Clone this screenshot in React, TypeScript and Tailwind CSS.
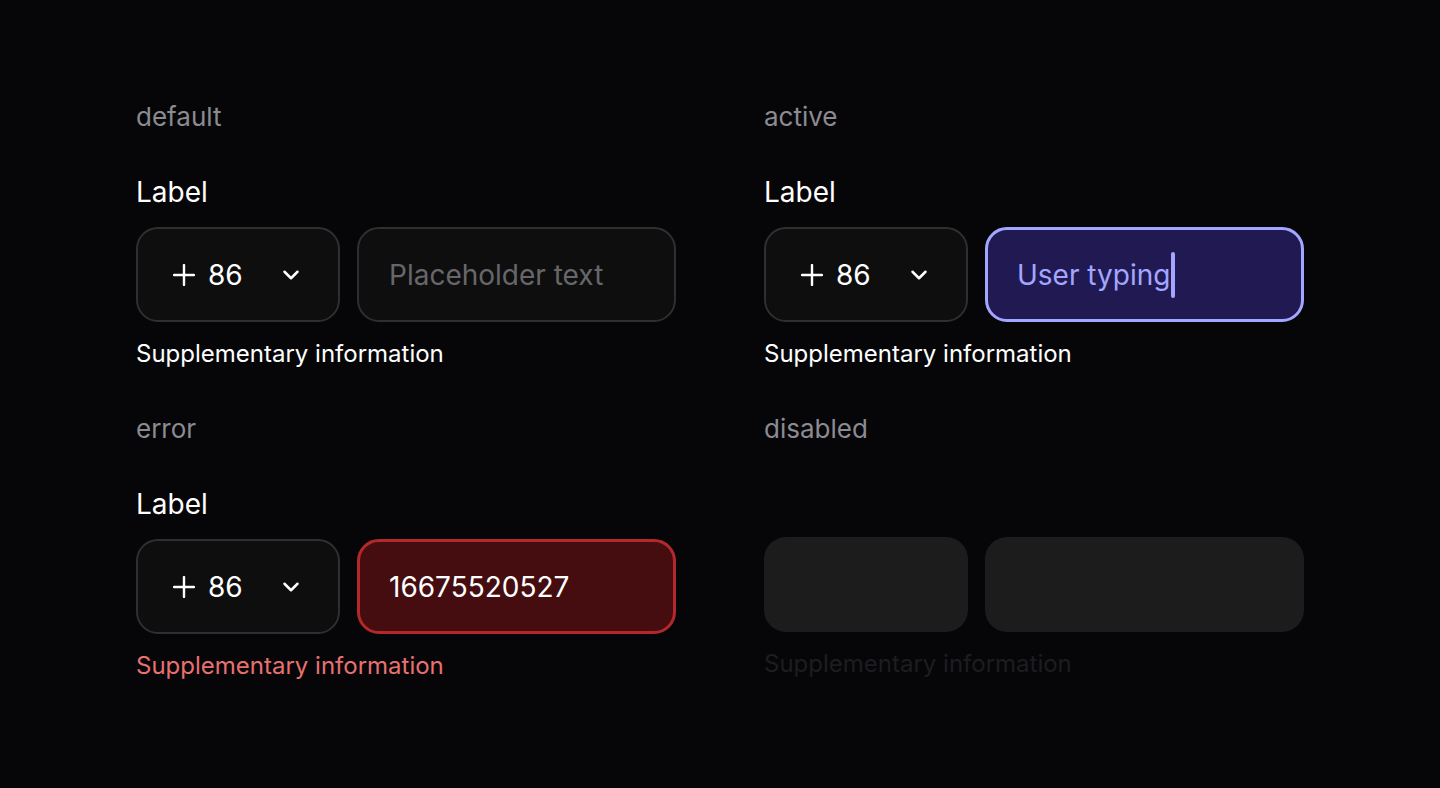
import React from 'react';

type State = 'default' | 'active' | 'error' | 'disabled';

const Chevron: React.FC = () => (
  <svg width="26" height="26" viewBox="0 0 24 24" fill="none" stroke="currentColor" strokeWidth="2.3" strokeLinecap="round" strokeLinejoin="round">
    <path d="M6 9l6 6 6-6" />
  </svg>
);

const Plus: React.FC = () => (
  <svg width="22" height="22" viewBox="0 0 22 22" fill="none" stroke="currentColor" strokeWidth="2.4" strokeLinecap="round">
    <path d="M11 1v20M1 11h20" />
  </svg>
);

const PhoneField: React.FC<{ state: State }> = ({ state }) => {
  if (state === 'disabled') {
    return (
      <div className="flex flex-col">
        <div className="h-[32px] text-[26px] leading-[32px] text-[#8b8b91]">disabled</div>
        <div className="mt-[92px] flex gap-[17px]">
          <div className="h-[95px] w-[204px] rounded-[22px] bg-[#1c1c1d]" />
          <div className="h-[95px] w-[319px] rounded-[22px] bg-[#1c1c1d]" />
        </div>
        <div className="mt-[18px] text-[24px] leading-[28px] text-[#1d1d1f]">Supplementary information</div>
      </div>
    );
  }

  const inputCls =
    state === 'active'
      ? 'border-[3px] border-[#a3a6ff] bg-[#211a52] text-[#a3a6ff]'
      : state === 'error'
      ? 'border-[3px] border-[#b3282a] bg-[#450d0f] text-white'
      : 'border-2 border-[#2f2f31] bg-[#0e0e0f] text-[#67676b]';

  const value = state === 'active' ? 'User typing' : state === 'error' ? '16675520527' : 'Placeholder text';

  return (
    <div className="flex flex-col">
      <div className="h-[32px] text-[26px] leading-[32px] text-[#8b8b91]">{state}</div>
      <div className="mt-[43px] h-[32px] text-[28px] leading-[32px] text-white">Label</div>
      <div className="mt-[19px] flex gap-[17px]">
        <div className="flex h-[95px] w-[204px] items-center justify-between rounded-[22px] border-2 border-[#2f2f31] bg-[#0e0e0f] pl-[35px] pr-[34px] text-white">
          <span className="flex items-center gap-[13px]">
            <Plus />
            <span className="text-[28px] leading-none">86</span>
          </span>
          <Chevron />
        </div>
        <div className={`flex h-[95px] w-[319px] items-center rounded-[22px] ${state === 'default' ? 'pl-[30px]' : 'pl-[29px]'} ${inputCls}`}>
          <span className="text-[28px] leading-none">{value}</span>
          {state === 'active' && <span className="ml-[1px] h-[46px] w-[4px] rounded-full bg-[#a3a6ff]" />}
        </div>
      </div>
      <div className={`mt-[18px] text-[24px] leading-[28px] ${state === 'error' ? 'text-[#e8716f]' : 'text-white'}`}>
        Supplementary information
      </div>
    </div>
  );
};

const App: React.FC = () => {
  return (
    <div className="min-h-screen w-full bg-[#060609] pl-[136px] pt-[101px]" style={{ fontFamily: 'Inter, "Noto Sans", sans-serif' }}>
      <div className="grid w-max grid-cols-[540px_540px] gap-x-[88px] gap-y-[45px]">
        <PhoneField state="default" />
        <PhoneField state="active" />
        <PhoneField state="error" />
        <PhoneField state="disabled" />
      </div>
    </div>
  );
};

export default App;
